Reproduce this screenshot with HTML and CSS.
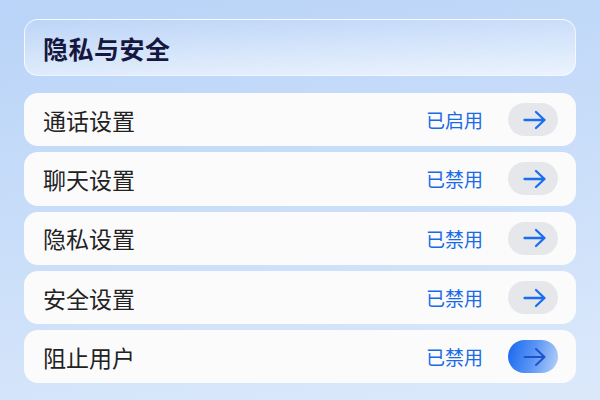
FILE: index.html
```html
<!DOCTYPE html>
<html lang="zh">
<head>
<meta charset="utf-8">
<link rel="stylesheet" href="styles.css">
</head>
<body>
<div class="page">
  <div class="header"><h1 class="title">隐私与安全</h1></div>
  <div class="list">
    <div class="row"><span class="label">通话设置</span><span class="status">已启用</span><span class="btn"><svg class="arrow" viewBox="0 0 24 20" width="24" height="20"><path d="M1.5 10h20M13 2l8.5 8-8.5 8" /></svg></span></div>
    <div class="row"><span class="label">聊天设置</span><span class="status">已禁用</span><span class="btn"><svg class="arrow" viewBox="0 0 24 20" width="24" height="20"><path d="M1.5 10h20M13 2l8.5 8-8.5 8" /></svg></span></div>
    <div class="row"><span class="label">隐私设置</span><span class="status">已禁用</span><span class="btn"><svg class="arrow" viewBox="0 0 24 20" width="24" height="20"><path d="M1.5 10h20M13 2l8.5 8-8.5 8" /></svg></span></div>
    <div class="row"><span class="label">安全设置</span><span class="status">已禁用</span><span class="btn"><svg class="arrow" viewBox="0 0 24 20" width="24" height="20"><path d="M1.5 10h20M13 2l8.5 8-8.5 8" /></svg></span></div>
    <div class="row"><span class="label">阻止用户</span><span class="status">已禁用</span><span class="btn btn-active"><svg class="arrow arrow-dark" viewBox="0 0 24 20" width="24" height="20"><path d="M1.5 10h20M13 2l8.5 8-8.5 8" /></svg></span></div>
  </div>
</div>
</body>
</html>
```
FILE: styles.css
```css
html, body {
  margin: 0;
  padding: 0;
  width: 600px;
  height: 400px;
  overflow: hidden;
}
body {
  background: linear-gradient(170deg, #b9d4f8 0%, #c8ddf9 45%, #dce9fb 100%);
  font-family: "Noto Sans CJK SC", "Noto Sans", sans-serif;
}
.page {
  padding: 19px 24px 0 24px;
  display: flex;
  flex-direction: column;
}
.header {
  height: 57px;
  box-sizing: border-box;
  border-radius: 14px;
  border: 1px solid rgba(255,255,255,0.75);
  background: linear-gradient(178deg, rgba(190,213,248,0.6) 0%, rgba(238,245,253,0.92) 100%);
  display: flex;
  align-items: center;
  padding-left: 18px;
}
.title {
  margin: 0;
  font-size: 25px;
  font-weight: 700;
  color: #16173f;
  letter-spacing: 0.5px;
}
.list {
  margin-top: 17px;
  display: flex;
  flex-direction: column;
  gap: 6px;
}
.row {
  height: 53.3px;
  box-sizing: border-box;
  border-radius: 14px;
  background: #fbfbfc;
  display: flex;
  align-items: center;
  padding: 0 18px 0 19px;
}
.label {
  font-size: 23px;
  color: #222;
  flex: 1;
}
.status {
  font-size: 19px;
  color: #1a6ae6;
  margin-right: 25px;
}
.btn {
  width: 50px;
  height: 33px;
  border-radius: 17px;
  background: #e5e7eb;
  display: flex;
  align-items: center;
  justify-content: center;
}
.arrow {
  margin-left: 3px;
  fill: none;
  stroke: #1a6df0;
  stroke-width: 2.3;
  stroke-linecap: round;
  stroke-linejoin: round;
}
.arrow-dark {
  stroke: #1d52cf;
  stroke-width: 2;
}
.btn-active {
  background: linear-gradient(105deg, #1766f0 0%, #5a95f4 50%, #b8d2f8 100%);
}
```
